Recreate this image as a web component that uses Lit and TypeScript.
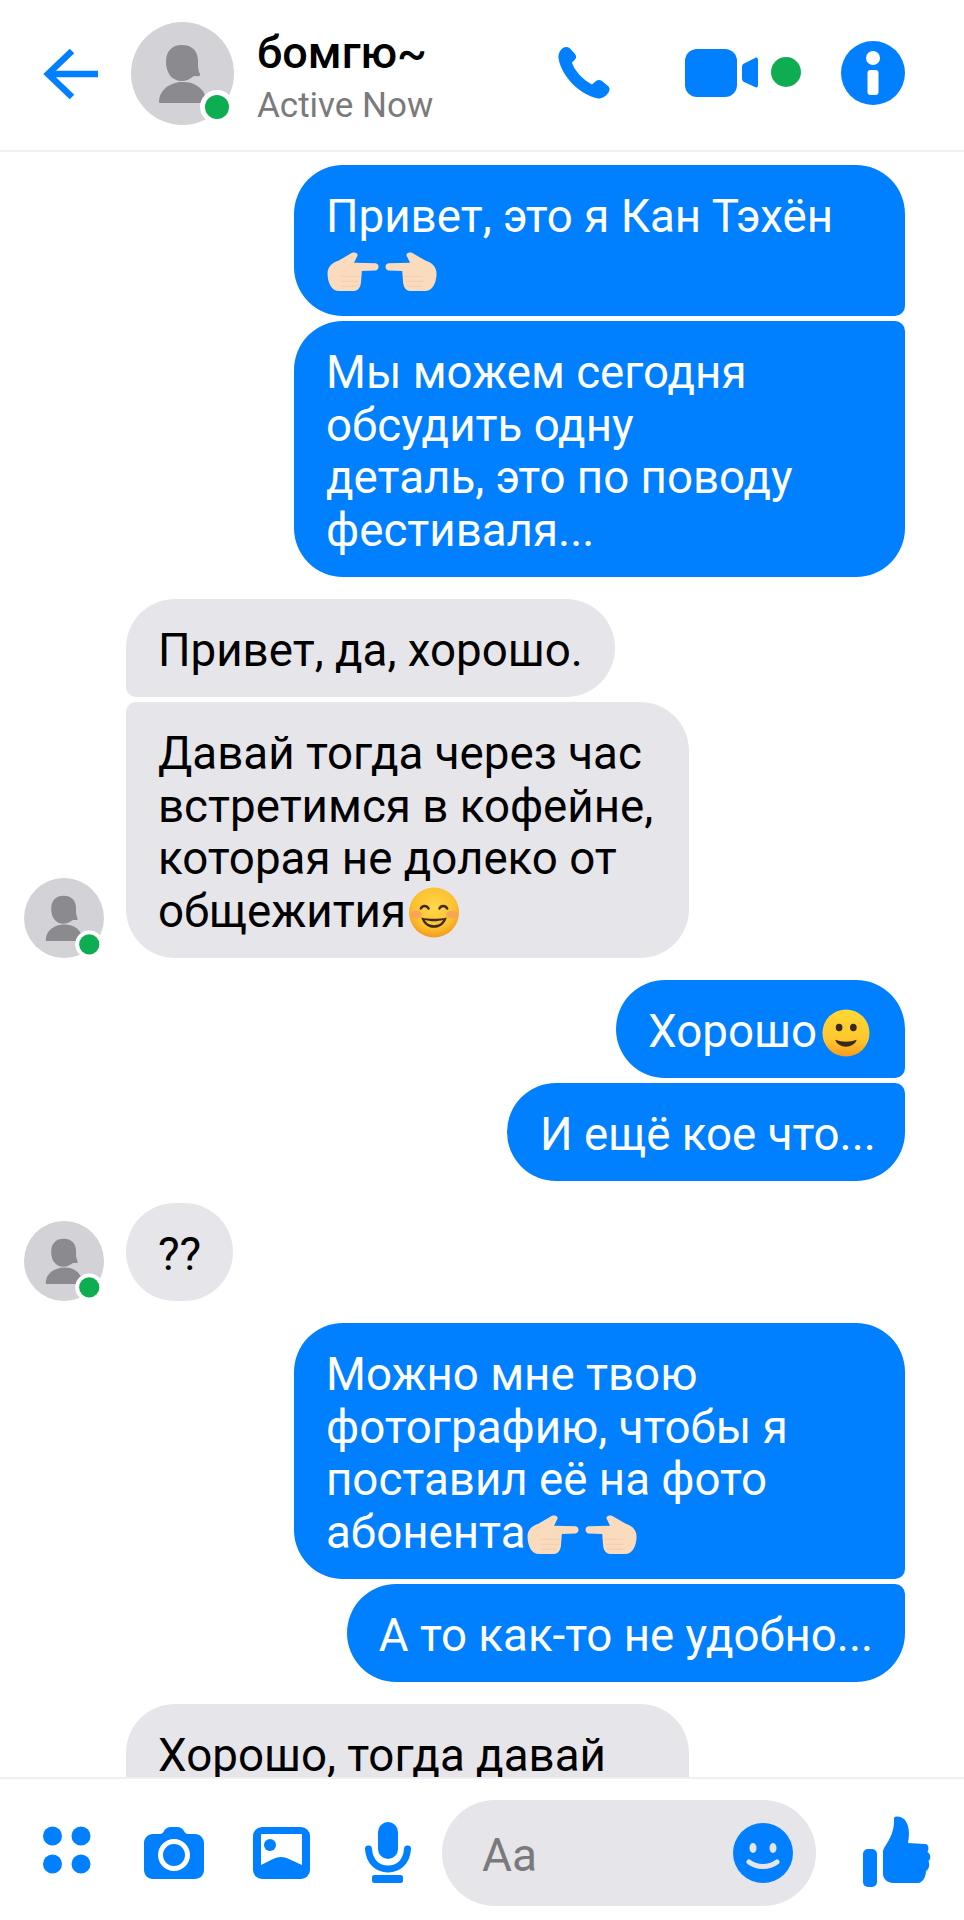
import { LitElement, html, css, svg } from "lit";
import { customElement } from "lit/decorators.js";

const avatar = (cls: string, cx: number, cy: number, ring: number, dot: number) => html`
  <svg class=${cls} viewBox="0 0 103 103" aria-hidden="true">
    <circle cx="51.5" cy="51.5" r="51.5" fill="#d3d2d6"></circle>
    <path fill="#8b8a8e" d="M35 40c0-11 6-17 16-17s16 6 16 16c0 6 0 9 2 13 1 3-3 2-6 2-4 3-8 5-12 5-10 0-16-8-16-19z"></path>
    <path fill="#8b8a8e" d="M28 80c0-12 11-20 24-20s22 7 24 20c0 1-1 1-2 1H30c-1 0-2 0-2-1z"></path>
    <circle cx=${cx} cy=${cy} r=${ring} fill="#fff"></circle>
    <circle cx=${cx} cy=${cy} r=${dot} fill="#0fad52"></circle>
  </svg>`;

const handBody = svg`
  <path fill="#fbdbbd" d="M1 30C1 23 6 19 12 17L26 9c4-1.500 7 1 5 4l-3 6 22 .5c4 .5 4 6.500 0 7.500l-14 .5-1 12.500c-1 6-4 8-9 8H13C5 48 1 39 1 30z"></path>
  <path fill="none" stroke="#f1cda9" stroke-width="1" d="M15 33h19M14 38h19M15 43h16"></path>`;

const handRight = html`<svg class="emoji" viewBox="0 0 58 53" aria-hidden="true">${handBody}</svg>`;
const handLeft = html`<svg class="emoji" viewBox="0 0 58 53" aria-hidden="true"><g transform="translate(54 0) scale(-1 1)">${handBody}</g></svg>`;

const blush = html`<svg class="emoji" viewBox="0 0 58 53" aria-hidden="true">
  <defs>
    <radialGradient id="gb" cx="50%" cy="40%" r="60%">
      <stop offset="0%" stop-color="#ffd84a"></stop>
      <stop offset="70%" stop-color="#fdc02f"></stop>
      <stop offset="100%" stop-color="#f39a1c"></stop>
    </radialGradient>
  </defs>
  <g transform="translate(-3 -1)">
    <circle cx="31" cy="28" r="25.500" fill="url(#gb)"></circle>
    <ellipse cx="13" cy="30" rx="5.500" ry="4" fill="#f59a6a" opacity=".75"></ellipse>
    <ellipse cx="49" cy="30" rx="5.500" ry="4" fill="#f59a6a" opacity=".75"></ellipse>
    <path fill="none" stroke="#3d2a1a" stroke-width="2.400" stroke-linecap="round" d="M17.500 24c1.800-3.500 6-3.500 8 0M36.500 24c1.800-3.500 6-3.500 8 0"></path>
    <path fill="#3d2a1a" d="M18 33c8 2 18 2 26 0-2 7-7 10.500-13 10.500S20 40 18 33zm3.500 2.500c2 4 5.500 5.500 9.500 5.500s7.500-1.500 9.500-5.500c-6 2-13 2-19 0z"></path>
  </g>
</svg>`;

const slight = html`<svg class="emoji narrow" viewBox="0 0 56 53" aria-hidden="true">
  <defs>
    <linearGradient id="gs" x1="0" y1="0" x2="0" y2="1">
      <stop offset="0%" stop-color="#fdd835"></stop>
      <stop offset="65%" stop-color="#fdc72e"></stop>
      <stop offset="100%" stop-color="#f99a1c"></stop>
    </linearGradient>
  </defs>
  <g transform="translate(0 -1.500)">
    <circle cx="29" cy="29" r="24" fill="url(#gs)"></circle>
    <ellipse cx="22" cy="23.500" rx="3.400" ry="3.800" fill="#3a2a1c"></ellipse>
    <ellipse cx="36.500" cy="23.500" rx="3.400" ry="3.800" fill="#3a2a1c"></ellipse>
    <path fill="#3a2a1c" d="M18 36c7 2.500 15 2.500 22 0-1.500 4.500-6 7-11 7s-9.500-2.500-11-7z"></path>
  </g>
</svg>`;

@customElement("app-root")
export class AppRoot extends LitElement {
  static styles = css`
    :host { display: block; width: 964px; height: 1920px; background: #fff; font-family: Roboto, "Noto Sans", sans-serif; overflow: hidden; }
    * { box-sizing: border-box; }
    .page { display: flex; flex-direction: column; height: 1920px; }

    .header { height: 152px; flex: none; display: flex; align-items: flex-start; border-bottom: 2px solid #f0eff3; background: #fff; }
    .back { width: 56px; height: 52px; margin: 48px 0 0 43px; flex: none; }
    .av-big { width: 103px; height: 103px; margin: 22px 0 0 32px; flex: none; }
    .who { margin: 28px 0 0 23px; width: 250px; flex: none; }
    .name { font-size: 45px; line-height: 50px; font-weight: 500; color: #000; }
    .active { font-size: 35px; line-height: 40px; margin-top: 8px; color: #7a7a7c; }
    .phone { width: 52px; height: 52px; margin: 47px 0 0 51px; flex: none; }
    .video { width: 117px; height: 52px; margin: 46px 0 0 75px; flex: none; }
    .info { width: 64px; height: 64px; margin: 41px 0 0 39px; flex: none; }

    .list { flex: 1; min-height: 0; overflow: hidden; padding: 13px 59px 0 24px; display: flex; flex-direction: column; }
    .group { display: flex; flex-direction: column; gap: 5px; margin-bottom: 21.800px; flex: none; }
    .group.me { align-items: flex-end; }
    .row { display: flex; align-items: flex-end; }
    .av-small { width: 80px; height: 80px; flex: none; margin-right: 22px; }
    .indent { padding-left: 102px; }
    .bubble { padding: 26.200px 32px 19.200px; font-size: 45.700px; line-height: 52.700px; border-radius: 49px; white-space: nowrap; flex: none; }
    .me .bubble { background: #0080ff; color: #fff; }
    .them .bubble { background: #e6e5e9; color: #000; }
    .w611 { width: 611px; }
    .w563 { width: 563px; }
    .w398 { width: 398px; padding-left: 33px; padding-right: 0; }
    .tall { height: 200px; }
    .me .br-s { border-bottom-right-radius: 10px; }
    .me .tr-s { border-top-right-radius: 10px; }
    .them .bl-s { border-bottom-left-radius: 10px; }
    .them .tl-s { border-top-left-radius: 10px; }
    .emoji { width: 58px; height: 52px; vertical-align: top; }
    .emoji.narrow { width: 56px; }

    .footer { height: 143px; flex: none; display: flex; align-items: flex-start; border-top: 2px solid #f0eff3; background: #fff; }
    .ic-dots { width: 48px; height: 48px; margin: 47px 0 0 43px; flex: none; }
    .ic-cam { width: 60px; height: 52px; margin: 48px 0 0 53px; flex: none; }
    .ic-img { width: 57px; height: 52px; margin: 48px 0 0 49px; flex: none; }
    .ic-mic { width: 46px; height: 61px; margin: 43px 0 0 55px; flex: none; }
    .input { width: 374px; height: 106px; margin: 21px 0 0 31px; flex: none; border-radius: 53px; background: #e6e5e9; display: flex; align-items: center; justify-content: space-between; padding: 0 23px 0 40px; }
    .aa { font-size: 46px; color: #7a7a7c; margin-top: 4px; }
    .ic-smile { width: 60px; height: 60px; flex: none; }
    .ic-like { width: 68px; height: 71px; margin: 37px 0 0 47px; flex: none; }
  `;

  render() {
    return html`
      <div class="page">
        <div class="header">
          <svg class="back" viewBox="0 0 56 52" aria-hidden="true">
            <path fill="none" stroke="#0080ff" stroke-width="6.500" d="M55 26H5M29 3 5 26l24 23"></path>
          </svg>
          ${avatar("av-big", 86, 85, 17, 12)}
          <div class="who">
            <div class="name">бомгю~</div>
            <div class="active">Active Now</div>
          </div>
          <svg class="phone" viewBox="0 0 52 52" aria-hidden="true">
            <path fill="#0080ff" d="M5 1C7-.5 10 0 12 1.500L17 7c1.500 2 1.500 4 0 5.500L14 15.500c2 7.500 11 17.500 20 22l4-3.500c2-1.500 4.500-1 6 0l6 5c2 2 2 4 .5 6.500-2.500 3.500-5.500 6-10.500 6C20 47 3 28 .5 11 0 7 2 3 5 1z"></path>
          </svg>
          <svg class="video" viewBox="0 0 117 52" aria-hidden="true">
            <rect x="0" y="3" width="52" height="48" rx="12" fill="#0080ff"></rect>
            <path fill="#0080ff" d="M57 21c0-2 1-3 2-3.500l11-5.500c2-1 3 0 3 2v25c0 2-1 3-3 2l-11-5c-1-.5-2-1.500-2-3.500z"></path>
            <circle cx="101" cy="26" r="15" fill="#0fad52"></circle>
          </svg>
          <svg class="info" viewBox="0 0 64 64" aria-hidden="true">
            <circle cx="32" cy="32" r="32" fill="#0080ff"></circle>
            <circle cx="32" cy="17" r="7" fill="#fff"></circle>
            <rect x="26.500" y="29" width="11" height="25" rx="3" fill="#fff"></rect>
          </svg>
        </div>

        <div class="list">
          <div class="group me">
            <div class="bubble w611 br-s">Привет, это я Кан Тэхён<br />${handRight}${handLeft}</div>
            <div class="bubble w611 tr-s">Мы можем сегодня<br />обсудить одну<br />деталь, это по поводу<br />фестиваля...</div>
          </div>
          <div class="group them">
            <div class="row indent"><div class="bubble bl-s">Привет, да, хорошо.</div></div>
            <div class="row">
              ${avatar("av-small", 84, 85.5, 18, 13)}
              <div class="bubble w563 tl-s">Давай тогда через час<br />встретимся в кофейне,<br />которая не долеко от<br />общежития${blush}</div>
            </div>
          </div>
          <div class="group me">
            <div class="bubble br-s">Хорошо${slight}</div>
            <div class="bubble w398 tr-s">И ещё кое что...</div>
          </div>
          <div class="group them">
            <div class="row">
              ${avatar("av-small", 84, 85.5, 18, 13)}
              <div class="bubble">??</div>
            </div>
          </div>
          <div class="group me">
            <div class="bubble w611 br-s">Можно мне твою<br />фотографию, чтобы я<br />поставил её на фото<br />абонента${handRight}${handLeft}</div>
            <div class="bubble tr-s">А то как-то не удобно...</div>
          </div>
          <div class="group them">
            <div class="row indent"><div class="bubble w563 tall bl-s">Хорошо, тогда давай</div></div>
          </div>
        </div>

        <div class="footer">
          <svg class="ic-dots" viewBox="0 0 48 48" aria-hidden="true">
            <circle cx="9.500" cy="10" r="9.500" fill="#0080ff"></circle>
            <circle cx="38" cy="10" r="9.500" fill="#0080ff"></circle>
            <circle cx="9.500" cy="38" r="9.500" fill="#0080ff"></circle>
            <circle cx="38" cy="38" r="9.500" fill="#0080ff"></circle>
          </svg>
          <svg class="ic-cam" viewBox="0 0 60 52" aria-hidden="true">
            <path fill="#0080ff" d="M9 7h7c2 0 3-1 4-3 1.500-2.500 4-4 7-4h6c3 0 5.500 1.500 7 4 1 2 2 3 4 3h7c5 0 9 4 9 9v27c0 5-4 9-9 9H9c-5 0-9-4-9-9V16c0-5 4-9 9-9z"></path>
            <circle cx="30" cy="28" r="13.500" fill="#0080ff" stroke="#fff" stroke-width="5"></circle>
          </svg>
          <svg class="ic-img" viewBox="0 0 57 52" aria-hidden="true">
            <rect width="57" height="52" rx="9" fill="#0080ff"></rect>
            <path fill="#fff" d="M8 8c0-.5.5-1 1-1h39c.5 0 1 .5 1 1v30L38 33c-7-4-13-4-20 0L8 38z"></path>
            <circle cx="17" cy="18" r="6" fill="#0080ff"></circle>
          </svg>
          <svg class="ic-mic" viewBox="0 0 46 61" aria-hidden="true">
            <rect x="13" y="0" width="20" height="37" rx="10" fill="#0080ff"></rect>
            <path fill="none" stroke="#0080ff" stroke-width="7" stroke-linecap="round" d="M3.500 27c1 13 9 20 19.500 20s18.500-7 19.500-20"></path>
            <rect x="7" y="53" width="31" height="8" rx="2.500" fill="#0080ff"></rect>
          </svg>
          <div class="input">
            <span class="aa">Aa</span>
            <svg class="ic-smile" viewBox="0 0 60 60" aria-hidden="true">
              <circle cx="30" cy="30" r="30" fill="#0080ff"></circle>
              <ellipse cx="20" cy="25" rx="3.500" ry="5" fill="#e6e5e9"></ellipse>
              <ellipse cx="40" cy="25" rx="3.500" ry="5" fill="#e6e5e9"></ellipse>
              <path fill="none" stroke="#e6e5e9" stroke-width="5" stroke-linecap="round" d="M16 39c8 6 20 6 28 0"></path>
            </svg>
          </div>
          <svg class="ic-like" viewBox="0 0 68 71" aria-hidden="true">
            <rect x="0" y="33" width="14" height="38" rx="5" fill="#0080ff"></rect>
            <path fill="#0080ff" d="M31 2c0-2 6-2.500 10 1 5 5 6 13 4 24l17 1c4 0 4 5 2.500 8 3.500 2 3.500 7 1 9 1.500 4 .5 8-2.500 10 0 5-3 12-8 12H30c-5 0-10-4-10-9V36c0-6 12-14 11-34z"></path>
          </svg>
        </div>
      </div>
    `;
  }
}
